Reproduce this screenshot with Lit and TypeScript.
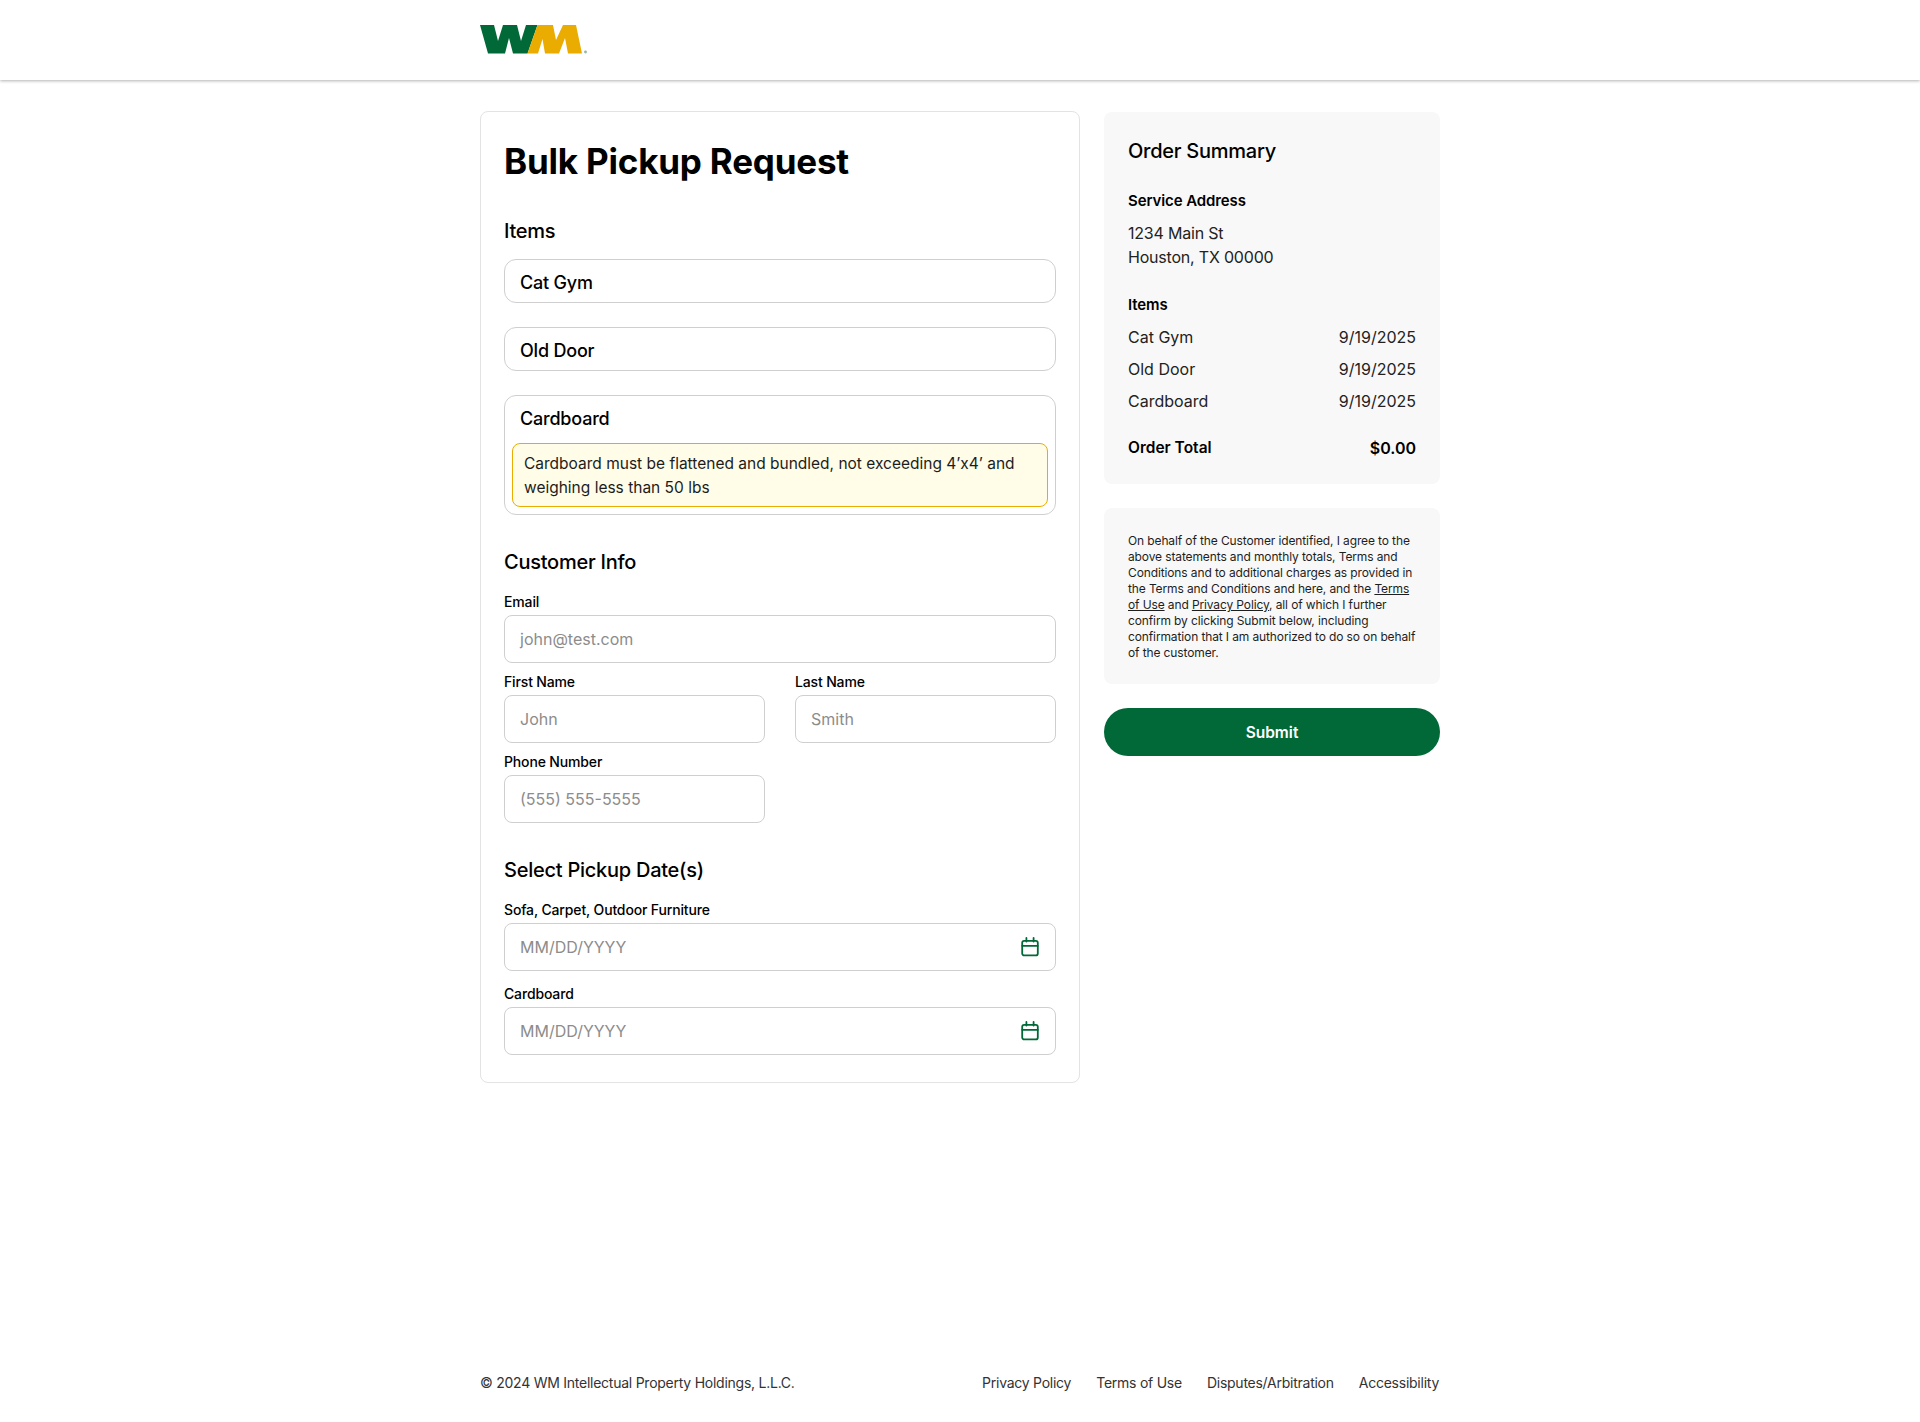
import { LitElement, html, css } from "lit";
import { customElement } from "lit/decorators.js";

const calendar = html`<svg class="cal" viewBox="0 0 20 20" fill="none" stroke="#006937" stroke-width="1.8" stroke-linecap="round" stroke-linejoin="round">
  <rect x="2.2" y="3.8" width="15.6" height="14.6" rx="2"></rect>
  <path d="M2.2 8.8h15.6M6.4 1v3.6M13.6 1v3.6"></path>
</svg>`;

@customElement("app-root")
export class AppRoot extends LitElement {
  static styles = css`
    :host { display: flex; flex-direction: column; min-height: 1422px; font-family: Inter, "Liberation Sans", sans-serif; color: #000; background: #fff; }
    * { box-sizing: border-box; }
    header { height: 80px; flex: none; box-shadow: 0 1px 3px rgba(0,0,0,.3); }
    .wrap { width: 960px; margin: 0 auto; }
    .logo-row { height: 80px; display: flex; align-items: center; }
    .logo { width: 108px; height: 30px; display: block; }
    main { flex: 1; padding-top: 31px; }
    .cols { display: flex; gap: 24px; align-items: flex-start; }
    .card { width: 600px; flex: none; border: 1px solid #e3e3e3; border-radius: 8px; padding: 27px 23px 27px; }
    h1 { margin: 0; font-size: 35px; line-height: 44px; font-weight: 700; letter-spacing: -.2px; height: 44px; }
    h2 { margin: 0; font-size: 20px; line-height: 28px; font-weight: 500; letter-spacing: -.25px; }
    .items-h { margin-top: 34px; }
    .item { margin-top: 14px; border: 1px solid #cfcfcf; border-radius: 12px; padding: 9px 7px 6px; }
    .item + .item { margin-top: 24px; }
    .item-name { font-size: 18px; line-height: 27px; font-weight: 500; padding-left: 8px; letter-spacing: -.2px; }
    .alert { margin: 11px 0 1px; border: 1px solid #eaac00; border-radius: 8px; background: #fffde8; padding: 8px 11px 6px; font-size: 15.5px; line-height: 24px; color: #1c1c1c; }
    .sec { margin-top: 33px; }
    .field { margin-top: 9px; }
    .first { margin-top: 16px; }
    label { display: block; font-size: 14px; line-height: 20px; font-weight: 500; letter-spacing: -.15px; }
    .input { margin-top: 3px; height: 48px; border: 1px solid #cfcfcf; border-radius: 8px; padding: 0 15px; display: flex; align-items: center; justify-content: space-between; font-size: 16px; color: #8c8c8c; }
    .two { display: grid; grid-template-columns: 1fr 1fr; gap: 0 30px; }
    .date-field { margin-top: 13px; }
    .cal { width: 20px; height: 20px; flex: none; }
    aside { width: 336px; flex: none; display: flex; flex-direction: column; gap: 24px; padding-top: 1px; }
    .panel { background: #f8f8f8; border-radius: 8px; padding: 24px; }
    .sum-title { margin: 0; font-size: 20px; line-height: 30px; font-weight: 500; letter-spacing: -.25px; }
    .sum-h { font-size: 15px; line-height: 24px; font-weight: 600; letter-spacing: -.1px; }
    .sum-h.addr { margin-top: 23px; }
    .addr-text { margin-top: 8px; font-size: 16px; line-height: 24px; color: #222; letter-spacing: -.2px; }
    .sum-h.its { margin-top: 24px; }
    .row { display: flex; justify-content: space-between; font-size: 16px; line-height: 24px; color: #222; margin-top: 8px; }
    .row.total { margin-top: 23px; font-weight: 600; color: #000; font-size: 15.5px; }
    .total-v { font-size: 16px; }
    .legal { padding: 25px 24px 23px; font-size: 12px; line-height: 16px; color: #1e1e1e; letter-spacing: -.12px; }
    .legal a { color: inherit; text-decoration: underline; }
    .submit { height: 48px; border-radius: 24px; background: #006937; color: #fff; display: flex; align-items: center; justify-content: center; font-size: 15.5px; font-weight: 600; }
    footer { flex: none; height: 49px; }
    .foot { display: flex; justify-content: space-between; font-size: 14px; line-height: 20px; color: #333; letter-spacing: -.25px; padding-right: 1px; }
    .links { display: flex; gap: 25px; }
  `;

  renderInput(ph: string, icon = false) {
    return html`<div class="input"><span>${ph}</span>${icon ? calendar : ""}</div>`;
  }

  render() {
    return html`
      <header><div class="wrap logo-row">
        <svg class="logo" viewBox="0 0 108 30">
          <polygon fill="#006937" points="0,0 14,0 18,16 23,0 37,0 41,16 46,0 57.5,0 47.5,28.5 33,28.5 29,13 25,28.5 8,28.5"></polygon>
          <polygon fill="#eaac00" points="47.5,28.5 57.5,0 73,0 76,15 83,0 96,0 102,28.5 88,28.5 85,13 79,28.5 65,28.5 62.5,14 58,28.5"></polygon>
          <circle cx="105.5" cy="27" r="1.4" fill="#8fb8a2"></circle>
        </svg>
      </div></header>
      <main><div class="wrap cols">
        <section class="card">
          <h1>Bulk Pickup Request</h1>
          <h2 class="items-h">Items</h2>
          <div class="item"><div class="item-name">Cat Gym</div></div>
          <div class="item"><div class="item-name">Old Door</div></div>
          <div class="item">
            <div class="item-name">Cardboard</div>
            <div class="alert">Cardboard must be flattened and bundled, not exceeding 4’x4’ and weighing less than 50 lbs</div>
          </div>
          <h2 class="sec">Customer Info</h2>
          <div class="first"><label>Email</label>${this.renderInput("john@test.com")}</div>
          <div class="two">
            <div class="field"><label>First Name</label>${this.renderInput("John")}</div>
            <div class="field"><label>Last Name</label>${this.renderInput("Smith")}</div>
            <div class="field"><label>Phone Number</label>${this.renderInput("(555) 555-5555")}</div>
          </div>
          <h2 class="sec">Select Pickup Date(s)</h2>
          <div class="first"><label>Sofa, Carpet, Outdoor Furniture</label>${this.renderInput("MM/DD/YYYY", true)}</div>
          <div class="date-field"><label>Cardboard</label>${this.renderInput("MM/DD/YYYY", true)}</div>
        </section>
        <aside>
          <div class="panel">
            <h3 class="sum-title">Order Summary</h3>
            <div class="sum-h addr">Service Address</div>
            <div class="addr-text">1234 Main St<br />Houston, TX 00000</div>
            <div class="sum-h its">Items</div>
            <div class="row"><span>Cat Gym</span><span>9/19/2025</span></div>
            <div class="row"><span>Old Door</span><span>9/19/2025</span></div>
            <div class="row"><span>Cardboard</span><span>9/19/2025</span></div>
            <div class="row total"><span>Order Total</span><span class="total-v">$0.00</span></div>
          </div>
          <div class="panel legal">On behalf of the Customer identified, I agree to the above statements and monthly totals, Terms and Conditions and to additional charges as provided in the Terms and Conditions and here, and the <a>Terms of Use</a> and <a>Privacy Policy</a>, all of which I further confirm by clicking Submit below, including confirmation that I am authorized to do so on behalf of the customer.</div>
          <div class="submit">Submit</div>
        </aside>
      </div></main>
      <footer><div class="wrap foot">
        <span>© 2024 WM Intellectual Property Holdings, L.L.C.</span>
        <div class="links"><span>Privacy Policy</span><span>Terms of Use</span><span>Disputes/Arbitration</span><span>Accessibility</span></div>
      </div></footer>
    `;
  }
}
